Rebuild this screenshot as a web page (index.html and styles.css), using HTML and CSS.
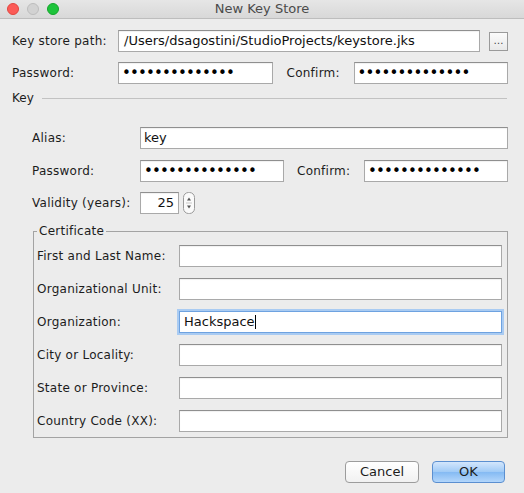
FILE: index.html
```html
<!DOCTYPE html>
<html>
<head>
<meta charset="utf-8">
<link rel="stylesheet" href="styles.css">
</head>
<body>
<div class="window">
  <div class="titlebar">
    <div class="lights">
      <span class="light red"></span>
      <span class="light gray"></span>
      <span class="light green"></span>
    </div>
    <div class="title">New Key Store</div>
  </div>
  <div class="content">
    <div class="row">
      <div class="lbl w-top">Key store path:</div>
      <div class="field path">/Users/dsagostini/StudioProjects/keystore.jks</div>
      <div class="browse">…</div>
    </div>
    <div class="row mt10">
      <div class="lbl w-top">Password:</div>
      <div class="field pw-top dots">••••••••••••••</div>
      <div class="lbl confirm c-top">Confirm:</div>
      <div class="field pw-top dots">••••••••••••••</div>
    </div>
    <div class="sep">
      <span class="sep-label">Key</span>
      <span class="sep-line"></span>
    </div>
    <div class="keysec">
      <div class="row">
        <div class="lbl w-key">Alias:</div>
        <div class="field grow">key</div>
      </div>
      <div class="row mt11">
        <div class="lbl w-key">Password:</div>
        <div class="field pw-key dots">••••••••••••••</div>
        <div class="lbl confirm c-key">Confirm:</div>
        <div class="field pw-key dots">••••••••••••••</div>
      </div>
      <div class="row mt10">
        <div class="lbl w-key">Validity (years):</div>
        <div class="field years">25</div>
        <div class="spinner">
          <svg width="12" height="22" viewBox="0 0 12 22">
            <rect x="0.5" y="0.5" width="11" height="21" rx="5" ry="5" fill="#fafafa" stroke="#9a9a9a"/>
            <path d="M4 8.5 L6 5.5 L8 8.5 Z" fill="#555"/>
            <path d="M4 13.5 L6 16.5 L8 13.5 Z" fill="#555"/>
            <line x1="3" y1="11" x2="9" y2="11" stroke="#c8c8c8"/>
          </svg>
        </div>
      </div>
      <fieldset class="cert">
        <legend>Certificate</legend>
        <div class="row">
          <div class="lbl w-cert">First and Last Name:</div>
          <div class="field grow"></div>
        </div>
        <div class="row mt11">
          <div class="lbl w-cert">Organizational Unit:</div>
          <div class="field grow"></div>
        </div>
        <div class="row mt11">
          <div class="lbl w-cert">Organization:</div>
          <div class="field grow focused">Hackspace<span class="caret"></span></div>
        </div>
        <div class="row mt11">
          <div class="lbl w-cert">City or Locality:</div>
          <div class="field grow"></div>
        </div>
        <div class="row mt11">
          <div class="lbl w-cert">State or Province:</div>
          <div class="field grow"></div>
        </div>
        <div class="row mt11">
          <div class="lbl w-cert">Country Code (XX):</div>
          <div class="field grow"></div>
        </div>
      </fieldset>
    </div>
    <div class="buttons">
      <div class="btn cancel">Cancel</div>
      <div class="btn ok">OK</div>
    </div>
  </div>
</div>
</body>
</html>
```
FILE: styles.css
```css
html, body {
  margin: 0;
  padding: 0;
  background: #ececec;
}
.window {
  width: 524px;
  height: 493px;
  background: #ececec;
  font-family: "DejaVu Sans", "Liberation Sans", sans-serif;
  font-size: 12px;
  color: #1c1c1c;
  box-sizing: border-box;
  overflow: hidden;
}
.titlebar {
  height: 18px;
  border-bottom: 1px solid #bdbdbd;
  background: linear-gradient(#e6e6e6, #d8d8d8);
  display: flex;
  align-items: center;
  position: relative;
}
.lights {
  display: flex;
  gap: 8px;
  padding-left: 7px;
}
.light {
  width: 10px;
  height: 10px;
  border-radius: 50%;
  display: block;
  border: 1px solid;
}
.red { background: #fc5b57; border-color: #e2463f; }
.gray { background: #d2d2d2; border-color: #bdbdbd; }
.green { background: #1dc43b; border-color: #14a52b; }
.title {
  position: absolute;
  left: 0;
  right: 0;
  top: 0;
  height: 18px;
  line-height: 17px;
  text-align: center;
  font-size: 13px;
  color: #4b4b4b;
}
.content {
  padding: 11px 16px 0 12px;
}
.row {
  display: flex;
  align-items: center;
  height: 22px;
}
.mt10 { margin-top: 10px; }
.mt11 { margin-top: 11px; }
.lbl {
  flex: none;
  white-space: nowrap;
  letter-spacing: 0.25px;
}
.w-top { width: 106px; }
.w-key { width: 108px; }
.w-cert { width: 142px; }
.confirm { width: 67px; }
.c-top { margin-left: 14px; }
.c-key { margin-left: 13px; }
.field {
  box-sizing: border-box;
  height: 22px;
  background: #fff;
  border: 1px solid #a9a9a9;
  border-top-color: #8f8f8f;
  box-shadow: inset 0 1px 1px rgba(0,0,0,0.06);
  padding: 0 3px;
  line-height: 20px;
  white-space: nowrap;
  overflow: hidden;
  font-size: 13px;
  color: #111;
}
.path { width: 362px; padding-left: 5px; }
.grow { flex: 1; }
.pw-top { width: 155px; }
.pw-key { width: 144px; }
.dots {
  font-size: 15px;
  letter-spacing: -0.85px;
  padding-left: 3px;
  color: #000;
}
.years {
  width: 39px;
  text-align: right;
  padding-right: 4px;
}
.browse {
  box-sizing: border-box;
  width: 19px;
  height: 19px;
  margin-left: 9px;
  border: 1px solid #9a9a9a;
  background: linear-gradient(#fbfbfb, #e9e9e9);
  font-size: 10px;
  line-height: 16px;
  text-align: center;
  color: #444;
}
.spinner {
  margin-left: 4px;
  height: 22px;
  display: flex;
}
.sep {
  display: flex;
  align-items: center;
  height: 16px;
  margin-top: 6px;
  margin-bottom: 21px;
  margin-right: 1px;
}
.sep-label {
  font-size: 12px;
  margin-right: 8px;
}
.sep-line {
  flex: 1;
  height: 1px;
  background: #c2c2c2;
}
.keysec {
  padding-left: 20px;
}
.cert {
  margin: 10px 0 0 1px;
  padding: 7px 5px 5px 3px;
  border: 1px solid #a3a3a3;
}
.cert legend {
  padding: 0 2px;
  margin: 0;
  line-height: 14px;
  font-size: 12px;
  letter-spacing: 0.25px;
}
.focused {
  border-color: #6ea2e0;
  box-shadow: 0 0 0 2px #a9cbf2;
  padding-left: 4px;
}
.caret {
  display: inline-block;
  width: 1px;
  height: 14px;
  background: #000;
  vertical-align: -3px;
}
.buttons {
  display: flex;
  justify-content: flex-end;
  gap: 13px;
  margin-top: 23px;
  padding-right: 3px;
}
.btn {
  box-sizing: border-box;
  height: 22px;
  border-radius: 4px;
  font-size: 13px;
  line-height: 20px;
  text-align: center;
}
.cancel {
  width: 74px;
  border: 1px solid #9c9c9c;
  background: linear-gradient(#ffffff, #f1f1f1);
}
.ok {
  width: 73px;
  border: 1px solid #5b8fd0;
  background: linear-gradient(#d3e6fc, #9fcaf6 50%, #84baf3 51%, #b3d6fb);
}
```
